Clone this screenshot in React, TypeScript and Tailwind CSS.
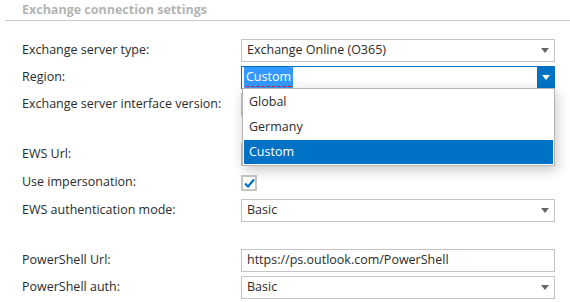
import React from 'react';

const font = { fontFamily: '"Open Sans", "Noto Sans", sans-serif' };

function Arrow({ white }: { white?: boolean }) {
  return (
    <svg width="8" height="5" viewBox="0 0 8 5" className="block">
      <path d="M0 0h8L4 5z" fill={white ? '#ffffff' : '#666666'} />
    </svg>
  );
}

function Select({ value }: { value: string }) {
  return (
    <div className="flex h-[23px] w-[314px] items-center justify-between border border-[#c4c4c4] bg-white pl-[5px] pr-[5px]">
      <span className="text-[#2b2b2b]">{value}</span>
      <Arrow />
    </div>
  );
}

function TextBox({ value }: { value: string }) {
  return (
    <div className="flex h-[23px] w-[314px] items-center border border-[#c4c4c4] bg-white pl-[5px]">
      <span className="text-[#2b2b2b]">{value}</span>
    </div>
  );
}

function Row({ label, className, children }: { label: string; className?: string; children?: React.ReactNode }) {
  return (
    <div className={'flex h-[23px] items-center ' + (className ?? '')}>
      <div className="w-[241px] shrink-0 whitespace-nowrap pl-[22px] text-[#2b2b2b]">{label}</div>
      {children}
    </div>
  );
}

export default function App() {
  return (
    <div className="relative h-[302px] w-[570px] overflow-hidden bg-white text-[12.5px] leading-none" style={font}>
      {/* Section title */}
      <div className="ml-[5px] h-[21px] border-b border-[#c8c8c8] pl-[17px] pt-[4px] text-[12.5px] font-bold text-[#b4b4b4]">
        Exchange connection settings
      </div>

      <div className="pt-[18px]">
        <Row label="Exchange server type:">
          <Select value="Exchange Online (O365)" />
        </Row>

        <Row label="Region:" className="mt-[4px]">
          <div className="flex h-[23px] w-[314px] items-stretch border border-[#0072c6] bg-white">
            <div className="flex flex-1 items-center pl-[2px]">
              <span className="relative bg-[#3399ff] px-[2px] py-[4px] text-white">
                Custom
                <span className="absolute bottom-[1px] left-[2px] right-[2px] border-b border-dashed border-[#e02020]" />
              </span>
            </div>
            <div className="flex w-[17px] items-center justify-center bg-[#0072c6]">
              <Arrow white />
            </div>
          </div>
        </Row>

        <Row label="Exchange server interface version:" className="mt-[4px]">
          <Select value="" />
        </Row>

        <Row label="EWS Url:" className="mt-[27px]">
          <TextBox value="" />
        </Row>

        <Row label="Use impersonation:" className="mt-[5px]">
          <div className="flex h-[16px] w-[16px] items-center justify-center border-2 border-[#c6c6c6] bg-white">
            <svg width="11" height="10" viewBox="0 0 11 10">
              <path d="M1 5.5l3 3L10 1.5" fill="none" stroke="#0072c6" strokeWidth="2.2" />
            </svg>
          </div>
        </Row>

        <Row label="EWS authentication mode:" className="mt-[5px]">
          <Select value="Basic" />
        </Row>

        <Row label="PowerShell Url:" className="mt-[27px]">
          <TextBox value="https://ps.outlook.com/PowerShell" />
        </Row>

        <Row label="PowerShell auth:" className="mt-[4px]">
          <Select value="Basic" />
        </Row>
      </div>

      {/* Open dropdown list of Region */}
      <div className="absolute left-[242px] top-[88px] w-[313px] border border-[#b4b4b4] bg-white p-[1px] shadow-[2px_4px_12px_rgba(0,0,0,0.22)]">
        <div className="flex h-[25px] items-center pl-[5px] text-[#2b2b2b]">Global</div>
        <div className="flex h-[25px] items-center pl-[5px] text-[#2b2b2b]">Germany</div>
        <div className="flex h-[24px] items-center bg-[#0072c6] pl-[5px] text-white">Custom</div>
      </div>
    </div>
  );
}
